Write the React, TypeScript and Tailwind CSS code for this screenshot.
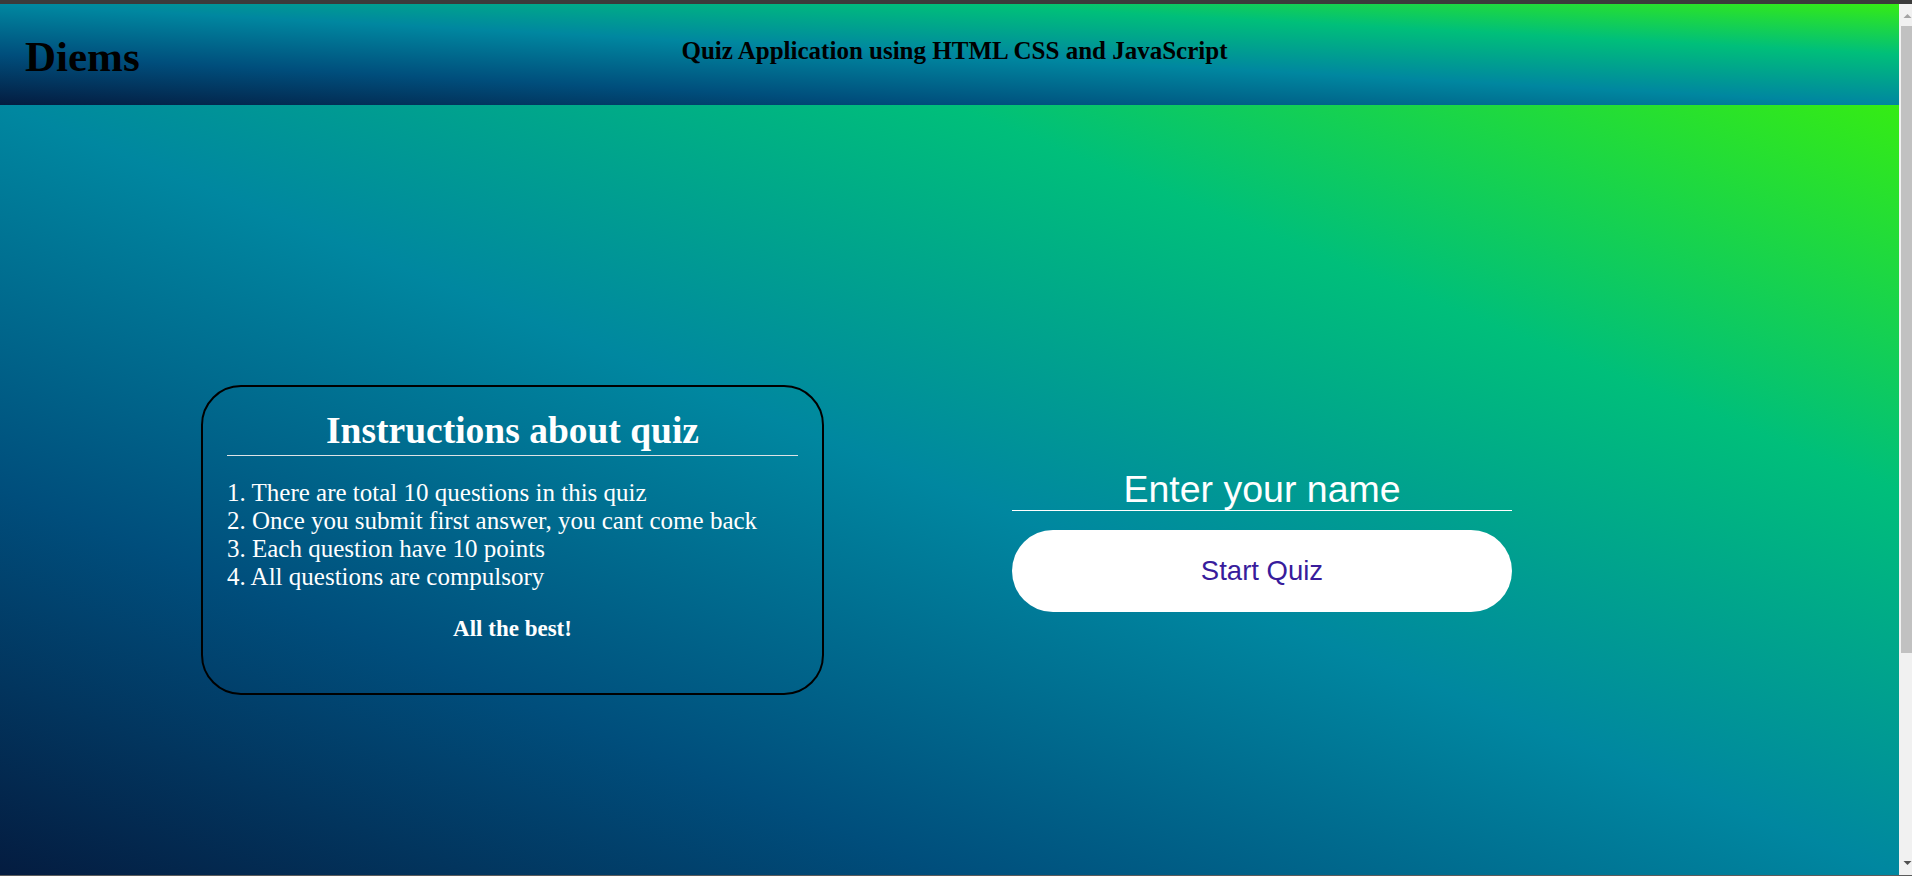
import React from 'react';

const serif = { fontFamily: '"Liberation Serif", "Times New Roman", serif' };
const sans = { fontFamily: '"Liberation Sans", Arial, sans-serif' };

const rules = [
  '1. There are total 10 questions in this quiz',
  '2. Once you submit first answer, you cant come back',
  '3. Each question have 10 points',
  '4. All questions are compulsory'
];

function Scrollbar() {
  return (
    <div className="w-[13px] shrink-0 bg-[#f1f1f1] flex flex-col pt-[10px] pb-[10px]">
      <svg width="13" height="4" viewBox="0 0 13 4" className="block">
        <polygon points="5.5,0 9.5,4 1.5,4" fill="#a3a3a3" transform="translate(3 0)" />
      </svg>
      <div className="mt-[8px] ml-[2px] w-[11px] h-[627px] bg-[#c1c1c1]" />
      <div className="flex-1" />
      <svg width="13" height="4" viewBox="0 0 13 4" className="block">
        <polygon points="1.5,0 9.5,0 5.5,4" fill="#505050" transform="translate(3 0)" />
      </svg>
    </div>
  );
}

function Header() {
  return (
    <header className="h-[101px] shrink-0 grid grid-cols-[1fr_auto_1fr] items-start bg-[linear-gradient(to_top_right,#041c40,#004e7c_25%,#0087a0_50%,#00bf7a_75%,#35ec14)]">
      <h1 style={serif} className="mt-[28px] pl-[25px] text-[43px] leading-[49px] font-bold text-black">
        Diems
      </h1>
      <h2 style={serif} className="mt-[32px] pl-[10px] text-[25px] leading-[29px] font-bold text-black">
        Quiz Application using HTML CSS and JavaScript
      </h2>
      <div />
    </header>
  );
}

function Instructions() {
  return (
    <div style={serif} className="w-[623px] h-[310px] shrink-0 border-2 border-black rounded-[40px] px-[24px] pt-[23px] text-white">
      <h2 className="text-center text-[37.5px] leading-[42px] font-bold pb-[3px] border-b border-[#dde3e6]">
        Instructions about quiz
      </h2>
      <ul className="mt-[23px] text-[25px] leading-[28px]">
        {rules.map((r) =>
        <li key={r}>{r}</li>
        )}
      </ul>
      <p className="mt-[21px] text-center text-[23px] font-bold">All the best!</p>
    </div>
  );
}

function StartForm() {
  return (
    <div style={sans} className="w-[500px] flex flex-col">
      <input
        type="text"
        placeholder="Enter your name"
        className="h-[43px] w-full bg-transparent border-0 border-b border-white text-center text-[37.5px] text-white placeholder:text-white outline-none"
      />
      <button className="mt-[19px] h-[82px] w-full rounded-full bg-white text-[27.5px] text-[#381c9c] cursor-pointer">
        Start Quiz
      </button>
    </div>
  );
}

export default function App() {
  return (
    <div className="h-[876px] w-full flex flex-col overflow-hidden bg-[#3b3b3b]">
      <div className="h-[4px] shrink-0 bg-[#3b3b3b]" />
      <div className="flex flex-1 min-h-0">
        <div className="flex-1 flex flex-col">
          <Header />
          <main className="flex-1 flex items-center pt-[100px] pl-[201px] gap-[188px] bg-[linear-gradient(to_top_right,#041c40,#004e7c_25%,#0087a0_50%,#00bf7a_75%,#35ec14)]">
            <Instructions />
            <StartForm />
          </main>
        </div>
        <Scrollbar />
      </div>
      <div className="h-[1px] shrink-0 bg-[#5c5c5c]" />
    </div>
  );
}
